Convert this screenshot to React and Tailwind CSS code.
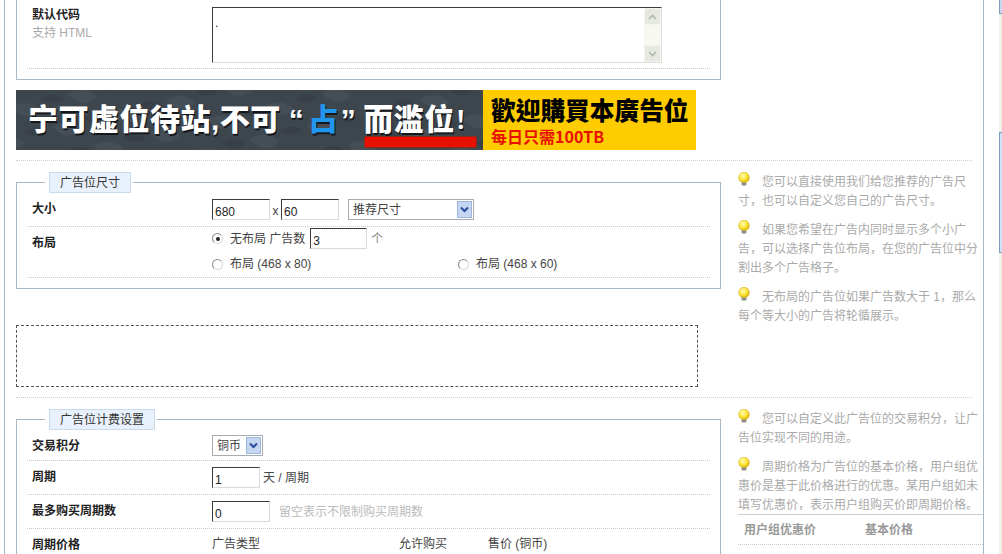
import React from "react";

function Row({ label, sub, children, className = "", labelClass = "pt-[7px]" }) {
  return (
    <div className={"flex border-b border-dotted border-[#c8c8c8] " + className}>
      <div className={"w-[185px] shrink-0 pl-[5px] " + labelClass}>
        <div className="font-bold text-[#222] leading-[18px]">{label}</div>
        {sub && <div className="text-[#aaa] leading-[16px] mt-[1px]">{sub}</div>}
      </div>
      <div className="flex-1 min-w-0">{children}</div>
    </div>
  );
}

function Field({ value, className = "" }) {
  return (
    <input
      readOnly
      value={value}
      className={"h-[21px] shrink-0 pl-[2px] pt-[4px] text-[12px] leading-[14px] text-[#222] bg-white outline-none border border-t-[#3c3c3c] border-l-[#3c3c3c] border-r-[#d8dadc] border-b-[#d8dadc] " + className}
    />
  );
}

function Arrow() {
  return (
    <span className="w-[15px] h-[17px] shrink-0 flex items-center justify-center bg-[#c5d6f2] border border-[#a0b6d8]">
      <svg width="9" height="7" viewBox="0 0 9 7">
        <path d="M1 1.5 L4.5 5 L8 1.5" fill="none" stroke="#2a4a9a" strokeWidth="2" />
      </svg>
    </span>
  );
}

function Select({ label, className = "" }) {
  return (
    <div className={"h-[21px] shrink-0 flex items-center justify-between pl-[4px] pr-[1px] bg-white border border-[#a5acb2] text-[#444] " + className}>
      <span>{label}</span>
      <Arrow />
    </div>
  );
}

function Radio({ checked }) {
  return (
    <span className="w-[11px] h-[11px] shrink-0 rounded-full bg-white border border-t-[#8a8a8a] border-l-[#8a8a8a] border-r-[#dcdcd4] border-b-[#dcdcd4] flex items-center justify-center">
      {checked && <span className="w-[4px] h-[4px] rounded-full bg-[#222]" />}
    </span>
  );
}

function Box({ title, children, className = "" }) {
  return (
    <fieldset className={"w-[705px] border border-[#a9b8c2] px-[10px] " + className}>
      <legend className="ml-[18px] pl-[4px] pr-[2px] bg-white">
        <span className="block h-[21px] px-[10px] bg-[#e8f1fb] border border-[#c8dbea] text-[#333] leading-[21px]">{title}</span>
      </legend>
      {children}
    </fieldset>
  );
}

function Bulb() {
  return (
    <svg width="12" height="14" viewBox="0 0 12 14" className="inline-block align-top -mt-[1px] mr-[12px]">
      <defs>
        <radialGradient id="bulb" cx="0.4" cy="0.35" r="0.7">
          <stop offset="0" stopColor="#fffbb0" />
          <stop offset="0.55" stopColor="#fde53a" />
          <stop offset="1" stopColor="#d8a800" />
        </radialGradient>
      </defs>
      <circle cx="6" cy="5.5" r="5.3" fill="url(#bulb)" stroke="#d9b21a" strokeWidth="0.6" />
      <rect x="3.5" y="10.5" width="5" height="3" rx="1" fill="#8f8f80" />
    </svg>
  );
}

function Tip({ lines }) {
  return (
    <div className="mb-[10px] leading-[19px] text-[#aaa] whitespace-nowrap">
      <div><Bulb />{lines[0]}</div>
      {lines.slice(1).map((l) => <div key={l}>{l}</div>)}
    </div>
  );
}

function Divider({ className = "" }) {
  return <div className={"w-[956px] border-b border-dotted border-[#c8d0d0] " + className} />;
}

function Banner() {
  return (
    <div className="mt-[10px] w-[680px] h-[60px] flex">
      <div className="relative w-[467px] bg-[#3d454d] overflow-hidden flex items-center pl-[12px] whitespace-nowrap text-white font-black text-[30px] leading-[36px] tracking-[0.5px] [text-shadow:1px_2px_0_#15191d]">
        <svg className="absolute inset-0" width="467" height="60">
          <defs>
            <pattern id="leaf" width="46" height="36" patternUnits="userSpaceOnUse" patternTransform="rotate(25)">
              <path d="M2 18 Q14 2 30 8 Q24 26 2 18 Z" fill="#454d55" />
              <path d="M26 34 Q34 20 46 24 Q42 36 26 34 Z" fill="#383f46" />
            </pattern>
          </defs>
          <rect width="467" height="60" fill="url(#leaf)" />
        </svg>
        <span className="relative">宁可虚位待站,不可</span>
        <span className="relative ml-[8px]">“</span>
        <span className="relative ml-[4px] text-[#2196ee]">占</span>
        <span className="relative ml-[2px]">”</span>
        <span className="relative ml-[7px]">而滥位</span>
        <span className="relative text-[24px] font-bold">！</span>
        <span className="absolute left-[348px] top-[46px] w-[113px] h-[12px] rounded-[2px] bg-[#e81000] border border-[#8a2a20]" />
      </div>
      <div className="w-[213px] bg-[#ffcc00] pl-[8px] pt-[4px] whitespace-nowrap font-black font-['Noto_Sans_CJK_TC','Liberation_Sans',sans-serif]">
        <div className="text-[24.7px] leading-[30px] text-black">歡迎購買本廣告位</div>
        <div className="text-[16px] leading-[20px] font-bold text-[#e81000] mt-[2px]">每日只需100TB</div>
      </div>
    </div>
  );
}

export default function App() {
  return (
    <div className="flex w-[1002px] h-[554px] overflow-hidden bg-white pl-[4px] text-[12px] font-['Liberation_Sans','Noto_Sans_CJK_SC',sans-serif]">
      <main className="w-[980px] h-full shrink-0 pl-[11px] border-x border-[#a9b8c2]">
        <div className="w-[705px] border-x border-b border-[#a9b8c2] px-[10px] pb-[10px]">
          <Row label="默认代码" sub="支持 HTML" className="h-[69px]" labelClass="pt-[6px]">
            <div className="mt-[7px] w-[450px] h-[56px] flex border border-t-[#3c3c3c] border-l-[#3c3c3c] border-r-[#e0e2e2] border-b-[#d8dcdc]">
              <textarea readOnly value="." className="flex-1 resize-none outline-none pl-[2px] pt-[8px] text-[12px] leading-[14px] text-[#222] overflow-hidden" />
              <div className="w-[17px] flex flex-col justify-between bg-[#f8f8f2]">
                <div className="h-[17px] flex items-center justify-center bg-[#e6e8e2] border border-[#f4f4ee]">
                  <svg width="9" height="6" viewBox="0 0 9 6"><path d="M1 5 L4.5 1.5 L8 5" fill="none" stroke="#b4b8b0" strokeWidth="1.6" /></svg>
                </div>
                <div className="h-[17px] flex items-center justify-center bg-[#e6e8e2] border border-[#f4f4ee]">
                  <svg width="9" height="6" viewBox="0 0 9 6"><path d="M1 1 L4.5 4.5 L8 1" fill="none" stroke="#b4b8b0" strokeWidth="1.6" /></svg>
                </div>
              </div>
            </div>
          </Row>
        </div>

        <Banner />
        <Divider className="mt-[10px]" />

        <div className="flex">
          <div className="w-[705px] pt-[11px] shrink-0">
            <Box title="广告位尺寸" className="pb-[10px]">
              <Row label="大小" className="h-[34px]">
                <div className="flex items-center mt-[6px] text-[#444]">
                  <Field value="680" className="w-[58px]" />
                  <span className="w-[11px] text-center pt-[2px]">x</span>
                  <Field value="60" className="w-[58px]" />
                  <Select label="推荐尺寸" className="w-[126px] ml-[9px]" />
                </div>
              </Row>
              <Row label="布局" className="h-[51px]">
                <div className="flex items-center mt-[1px] h-[21px] text-[#444]">
                  <Radio checked />
                  <span className="ml-[7px]">无布局 广告数</span>
                  <Field value="3" className="w-[57px] ml-[5px]" />
                  <span className="ml-[4px] text-[#888]">个</span>
                </div>
                <div className="flex items-center mt-[5px] h-[20px] text-[#444]">
                  <Radio />
                  <span className="ml-[7px] w-[228px]">布局 (468 x 80)</span>
                  <Radio />
                  <span className="ml-[7px]">布局 (468 x 60)</span>
                </div>
              </Row>
            </Box>
            <div className="mt-[36px] w-[682px] h-[62px] border border-dashed border-[#555]" />
          </div>
          <div className="ml-[17px] pt-[12px] w-[244px]">
            <Tip lines={["您可以直接使用我们给您推荐的广告尺", "寸，也可以自定义您自己的广告尺寸。"]} />
            <Tip lines={["如果您希望在广告内同时显示多个小广", "告，可以选择广告位布局，在您的广告位中分", "割出多个广告格子。"]} />
            <Tip lines={["无布局的广告位如果广告数大于 1，那么", "每个等大小的广告将轮循展示。"]} />
          </div>
        </div>

        <Divider className="mt-[10px]" />

        <div className="flex">
          <div className="w-[705px] pt-[11px] shrink-0">
            <Box title="广告位计费设置">
              <Row label="交易积分" className="h-[31px]">
                <div className="mt-[5px]"><Select label="铜币" className="w-[51px]" /></div>
              </Row>
              <Row label="周期" className="h-[34px]">
                <div className="flex items-center mt-[6px] text-[#444]">
                  <Field value="1" className="w-[48px]" />
                  <span className="ml-[3px]">天 / 周期</span>
                </div>
              </Row>
              <Row label="最多购买周期数" className="h-[34px]">
                <div className="flex items-center mt-[6px]">
                  <Field value="0" className="w-[58px]" />
                  <span className="ml-[9px] text-[#bbb]">留空表示不限制购买周期数</span>
                </div>
              </Row>
              <Row label="周期价格" className="h-[60px] border-b-0">
                <div className="flex pt-[6px] leading-[18px] text-[#444]">
                  <span className="w-[187px]">广告类型</span>
                  <span className="w-[89px]">允许购买</span>
                  <span>售价 (铜币)</span>
                </div>
              </Row>
            </Box>
          </div>
          <div className="ml-[17px] pt-[12px] w-[245px]">
            <Tip lines={["您可以自定义此广告位的交易积分，让广", "告位实现不同的用途。"]} />
            <div className="leading-[19px] text-[#aaa] whitespace-nowrap">
              <div><Bulb />周期价格为广告位的基本价格，用户组优</div>
              <div>惠价是基于此价格进行的优惠。某用户组如未</div>
              <div>填写优惠价，表示用户组购买价即周期价格。</div>
            </div>
            <div className="-mt-[1px] border-t border-[#c5d0d8]">
              <div className="flex h-[30px] items-center pl-[6px] font-bold text-[#999] border-b border-dotted border-[#c8c8c8]">
                <span className="w-[121px]">用户组优惠价</span>
                <span>基本价格</span>
              </div>
            </div>
          </div>
        </div>
      </main>

      <aside className="ml-[15px] w-[3px] h-full flex flex-col bg-[#f0efe8]">
        <div className="h-[14px] bg-[#c8d8f0] border-l border-b border-[#7f9db9]" />
        <div className="h-[118px]" />
        <div className="h-[121px] bg-[#d0e0f8] border-l border-y border-[#7f9db9]" />
      </aside>
    </div>
  );
}
